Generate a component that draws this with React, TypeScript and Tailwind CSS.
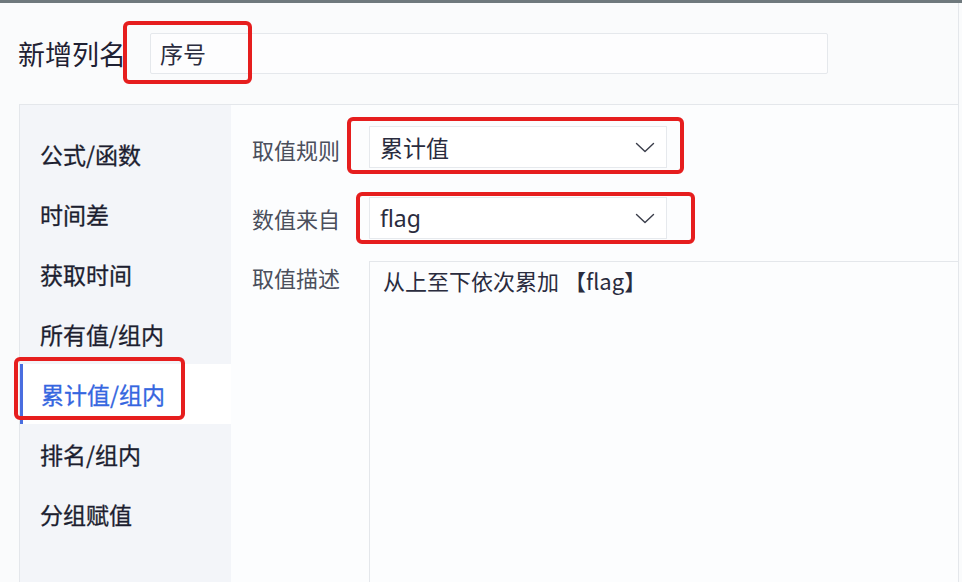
import React from "react";

const Chevron = () => (
  <svg width="20" height="11" viewBox="0 0 20 11" fill="none">
    <path d="M1.5 1.5 L10 9.5 L18.5 1.5" stroke="#3a3d4a" strokeWidth="1.4" strokeLinecap="round" strokeLinejoin="round" />
  </svg>
);

const items = ["公式/函数", "时间差", "获取时间", "所有值/组内", "累计值/组内", "排名/组内", "分组赋值"];

export default function App() {
  return (
    <div
      className="relative w-[962px] h-[582px] overflow-hidden bg-[#fafbfc] text-[#24263a]"
      style={{ fontFamily: '"Noto Sans CJK SC", "Noto Sans", sans-serif' }}
    >
      <div className="h-[3px] bg-[#6f797d]" />
      <div className="w-[959px] h-[579px] border-r border-[#e4e7eb] flex flex-col">
        {/* header */}
        <div className="h-[101px] flex items-start pt-[30px] pl-[18px] shrink-0">
          <div className="h-[41px] w-[132px] flex items-center text-[27px] leading-none text-[#1f2133]">新增列名</div>
          <div className="h-[41px] w-[678px] border border-[#e5e8ec] bg-[#fdfdfe] rounded-[2px] flex items-center pl-[9px] text-[23px] leading-none text-[#2a2c3e]">
            序号
          </div>
        </div>
        {/* panel */}
        <div className="flex flex-1 ml-[19px] border-t border-l border-[#e4e7eb]">
          <div className="w-[211px] bg-[#f3f5f9] pt-[19px] flex flex-col shrink-0">
            {items.map((t, i) =>
              i === 4 ? (
                <div
                  key={t}
                  className="h-[60px] flex items-center pl-[18px] bg-white border-l-[3px] border-[#4a6ee0] text-[23px] leading-none text-[#3566e0] [-webkit-text-stroke:0.3px_#3566e0]"
                >
                  {t}
                </div>
              ) : (
                <div key={t} className="h-[60px] flex items-center pl-[20px] text-[23px] leading-none text-[#1c1e30] [-webkit-text-stroke:0.3px_#1c1e30]">
                  {t}
                </div>
              )
            )}
          </div>
          <div className="flex-1 bg-[#fcfdfe] pt-[21px] pl-[21px] flex flex-col">
            <div className="flex items-center h-[42px]">
              <div className="w-[117px] text-[22px] leading-none text-[#4b4f5c] pt-[4px]">取值规则</div>
              <div className="w-[298px] h-[42px] border border-[#e6e9ed] bg-white flex items-center justify-between pl-[10px] pr-[11px]">
                <span className="text-[23px] leading-none text-[#2a2c3e]">累计值</span>
                <Chevron />
              </div>
            </div>
            <div className="flex items-center h-[42px] mt-[29px]">
              <div className="w-[117px] text-[22px] leading-none text-[#4b4f5c]">数值来自</div>
              <div className="w-[298px] h-[42px] border border-[#e6e9ed] bg-white flex items-center justify-between pl-[10px] pr-[11px]">
                <span className="text-[23px] leading-none text-[#2a2c3e]" style={{ fontFamily: '"Noto Sans", "Noto Sans CJK SC", sans-serif' }}>flag</span>
                <Chevron />
              </div>
            </div>
            <div className="flex flex-1 mt-[22px]">
              <div className="w-[117px] text-[22px] leading-none text-[#4b4f5c] pt-[5px]">取值描述</div>
              <div className="flex-1 border-t border-l border-[#e4e7eb] bg-[#fcfdfe] pl-[13px] pt-[4px] text-[22px] leading-[28px] text-[#2a2c3e]">
                从上至下依次累加 【flag】
              </div>
            </div>
          </div>
        </div>
      </div>

      {/* red annotation boxes */}
      <div className="absolute left-[123px] top-[21px] w-[129px] h-[63px] border-[4px] border-[#e61e1e] rounded-[6px]" />
      <div className="absolute left-[347px] top-[117px] w-[337px] h-[57px] border-[4px] border-[#e61e1e] rounded-[6px]" />
      <div className="absolute left-[356px] top-[192px] w-[339px] h-[52px] border-[4px] border-[#e61e1e] rounded-[6px]" />
      <div className="absolute left-[14px] top-[357px] w-[171px] h-[63px] border-[4px] border-[#e61e1e] rounded-[6px]" />
    </div>
  );
}
